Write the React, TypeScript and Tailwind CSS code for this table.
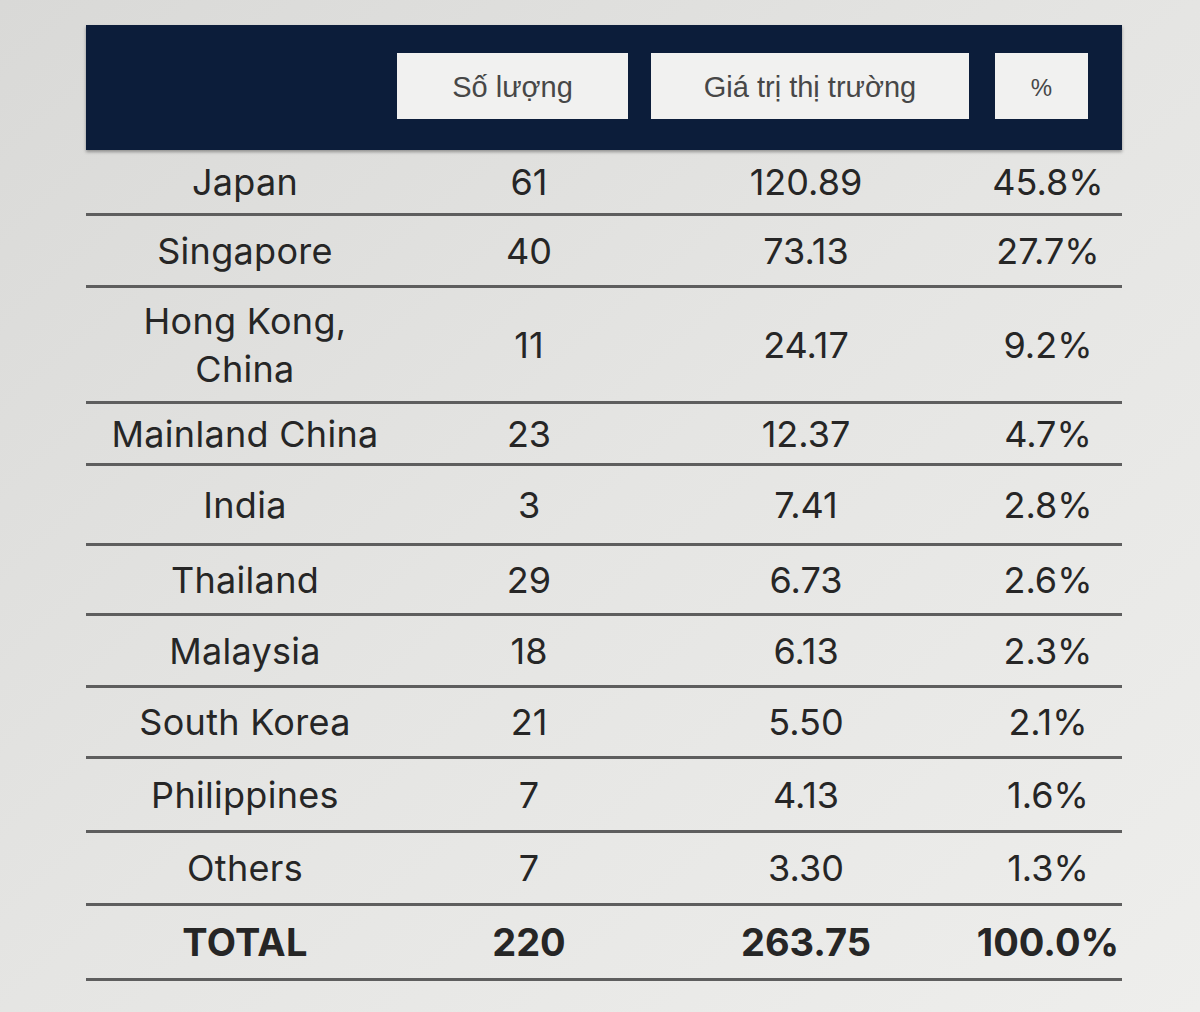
import React from "react";

type Row = { name: React.ReactNode; n: string; v: string; p: string; h: number; bold?: boolean };

const rows: Row[] = [
  { name: "Japan", n: "61", v: "120.89", p: "45.8%", h: 66 },
  { name: "Singapore", n: "40", v: "73.13", p: "27.7%", h: 72 },
  { name: <>Hong Kong,<br />China</>, n: "11", v: "24.17", p: "9.2%", h: 116 },
  { name: "Mainland China", n: "23", v: "12.37", p: "4.7%", h: 62 },
  { name: "India", n: "3", v: "7.41", p: "2.8%", h: 80 },
  { name: "Thailand", n: "29", v: "6.73", p: "2.6%", h: 70 },
  { name: "Malaysia", n: "18", v: "6.13", p: "2.3%", h: 72 },
  { name: "South Korea", n: "21", v: "5.50", p: "2.1%", h: 71 },
  { name: "Philippines", n: "7", v: "4.13", p: "1.6%", h: 74 },
  { name: "Others", n: "7", v: "3.30", p: "1.3%", h: 73 },
  { name: "TOTAL", n: "220", v: "263.75", p: "100.0%", h: 75, bold: true },
];

export default function App() {
  return (
    <div
      className="w-[1200px] h-[1012px] overflow-hidden bg-gradient-to-br from-[#d9d9d7] via-[#e5e5e3] to-[#eeeeec] text-[#262626]"
      style={{ fontFamily: "Inter, 'Noto Sans', sans-serif" }}
    >
      <div className="ml-[86px] w-[1036px] pt-[25px]">
        {/* header */}
        <div className="h-[125px] bg-[#0c1d3a] flex items-start pt-[28px] pl-[311px] shadow-[0_2px_3px_rgba(0,0,0,0.35)]">
          <div className="w-[231px] h-[66px] bg-[#f1f1f0] flex items-center justify-center pt-[3px] text-[29px] text-[#474747]" style={{ fontFamily: "'Liberation Sans', Arial, sans-serif" }}>
            Số lượng
          </div>
          <div className="ml-[23px] w-[318px] h-[66px] bg-[#f1f1f0] flex items-center justify-center pt-[3px] text-[29px] text-[#474747]" style={{ fontFamily: "'Liberation Sans', Arial, sans-serif" }}>
            Giá trị thị trường
          </div>
          <div className="ml-[26px] w-[93px] h-[66px] bg-[#f1f1f0] flex items-center justify-center pt-[3px] text-[24px] text-[#474747]" style={{ fontFamily: "'Liberation Sans', Arial, sans-serif" }}>
            %
          </div>
        </div>
        {/* rows */}
        {rows.map((r, i) => (
          <div
            key={i}
            className={`grid grid-cols-[318px_250px_304px_180px] items-center border-b-[3px] border-[#5e5e5e] ${r.bold ? "font-bold text-[38px]" : "font-normal text-[36px]"}`}
            style={{ height: r.h }}
          >
            <div className="text-center leading-[48px] tracking-[0.3px]">{r.name}</div>
            <div className="text-center">{r.n}</div>
            <div className="text-center">{r.v}</div>
            <div className="text-center">{r.p}</div>
          </div>
        ))}
      </div>
    </div>
  );
}
